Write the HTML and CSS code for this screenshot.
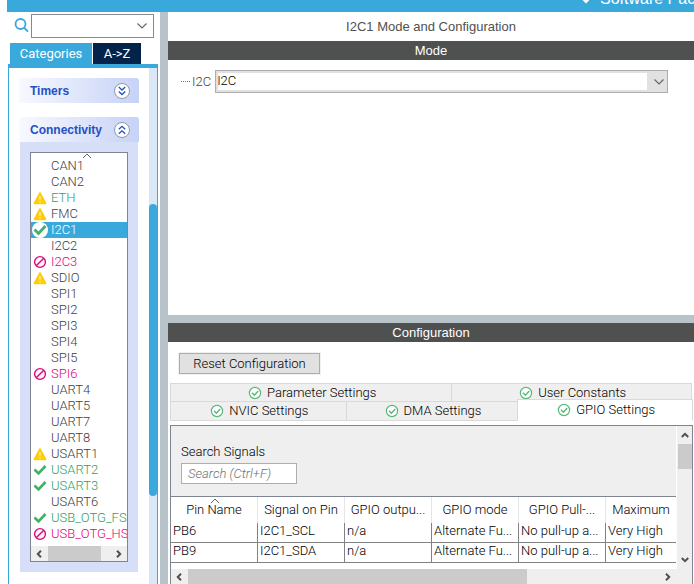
FILE: index.html
```html
<!DOCTYPE html>
<html lang="en">
<head>
<meta charset="utf-8">
<title>I2C1 Mode and Configuration</title>
<link rel="stylesheet" href="styles.css">
</head>
<body>
<svg class="defs" aria-hidden="true">
  <symbol id="warn" viewBox="0 0 14 14"><path d="M7 2 L12.6 12.4 H1.4 Z" fill="#ffcc0a" stroke="#ffcc0a" stroke-width="1.6" stroke-linejoin="round"/><path d="M7 5v4.2M7 10.3v1.5" stroke="#fff3c0" stroke-width="1.2"/></symbol>
  <symbol id="check" viewBox="0 0 14 14"><path d="M1.5 6.5 L5.5 10.5 L12.5 3" fill="none" stroke="#46ad6c" stroke-width="2.6"/></symbol>
  <symbol id="checked" viewBox="0 0 16 16"><circle cx="8" cy="8" r="8" fill="#fff"/><path d="M2.5 7.5 L6.5 11.5 L13.5 4" fill="none" stroke="#46ad6c" stroke-width="2.8"/></symbol>
  <symbol id="ban" viewBox="0 0 14 14"><circle cx="7" cy="7" r="5.4" fill="none" stroke="#e6007e" stroke-width="1.4"/><path d="M3.4 10.6 L10.6 3.4" stroke="#e6007e" stroke-width="1.4"/></symbol>
  <symbol id="ok" viewBox="0 0 14 14"><circle cx="7" cy="7" r="5.6" fill="#fff" stroke="#58b97b" stroke-width="1.2"/><path d="M4 6.7 L6.4 9.2 L10.2 5" fill="none" stroke="#58b97b" stroke-width="1.4"/></symbol>
  <symbol id="down" viewBox="0 0 12 8"><path d="M1.5 1.5 L6 6 L10.5 1.5" fill="none" stroke="currentColor" stroke-width="1.2"/></symbol>
  <symbol id="arrow" viewBox="0 0 10 10"><path d="M1.8 7 L5 3.8 L8.2 7" fill="none" stroke="#505050" stroke-width="2"/></symbol>
  <symbol id="sort" viewBox="0 0 10 6"><path d="M1 5 L5 1 L9 5" fill="none" stroke="#666" stroke-width="1"/></symbol>
</svg>
<div class="app">
  <header class="topbar"><svg class="packs-icon" viewBox="0 0 12 8" aria-hidden="true"><path d="M1.5 1.5 L6 6 L10.5 1.5" fill="none" stroke="#fff" stroke-width="2"/></svg><a href="#packs">Software Packs</a></header>
  <div class="main">
    <aside class="sidebar">
      <div class="search">
        <svg class="search-icon" viewBox="0 0 16 16" aria-hidden="true"><circle cx="6.5" cy="6" r="5" fill="none" stroke="#39a9dc" stroke-width="1.8"/><path d="M10 9.6 L14 13.6" stroke="#39a9dc" stroke-width="2"/></svg>
        <div class="combo finder"><select aria-label="Search peripherals"><option></option></select><svg aria-hidden="true"><use href="#down"/></svg></div>
      </div>
      <div class="side-tabs"><button class="active">Categories</button><button>A-&gt;Z</button></div>
      <div class="side-body">
        <div class="groups">
          <button class="group">Timers<svg viewBox="0 0 18 18" aria-hidden="true"><circle cx="9" cy="9" r="7.5" fill="#fff" stroke="#8d98ad"/><path d="M5.8 5 L9 8 L12.2 5 M5.8 9.5 L9 12.5 L12.2 9.5" fill="none" stroke="#2450c4" stroke-width="1.3"/></svg></button>
          <div class="open-group">
            <button class="group">Connectivity<svg viewBox="0 0 18 18" aria-hidden="true"><circle cx="9" cy="9" r="7.5" fill="#fff" stroke="#8d98ad"/><path d="M5.8 8.3 L9 5.3 L12.2 8.3 M5.8 12.8 L9 9.8 L12.2 12.8" fill="none" stroke="#2450c4" stroke-width="1.3"/></svg></button>
            <div class="group-body">
              <div class="listbox">
                <svg class="list-sort" aria-hidden="true"><use href="#sort"/></svg>
                <ul>
                  <li>CAN1</li>
                  <li>CAN2</li>
                  <li class="on"><svg><use href="#warn"/></svg>ETH</li>
                  <li><svg><use href="#warn"/></svg>FMC</li>
                  <li class="selected"><svg><use href="#checked"/></svg>I2C1</li>
                  <li>I2C2</li>
                  <li class="off"><svg><use href="#ban"/></svg>I2C3</li>
                  <li><svg><use href="#warn"/></svg>SDIO</li>
                  <li>SPI1</li>
                  <li>SPI2</li>
                  <li>SPI3</li>
                  <li>SPI4</li>
                  <li>SPI5</li>
                  <li class="off"><svg><use href="#ban"/></svg>SPI6</li>
                  <li>UART4</li>
                  <li>UART5</li>
                  <li>UART7</li>
                  <li>UART8</li>
                  <li><svg><use href="#warn"/></svg>USART1</li>
                  <li class="on"><svg><use href="#check"/></svg>USART2</li>
                  <li class="on"><svg><use href="#check"/></svg>USART3</li>
                  <li>USART6</li>
                  <li class="on"><svg><use href="#check"/></svg>USB_OTG_FS</li>
                  <li class="off"><svg><use href="#ban"/></svg>USB_OTG_HS</li>
                </ul>
                <div class="hbar"><svg class="left"><use href="#arrow"/></svg><div class="track"><div class="thumb list-thumb"></div></div><svg class="right"><use href="#arrow"/></svg></div>
              </div>
            </div>
          </div>
        </div>
        <div class="side-scroll"><div></div></div>
      </div>
    </aside>
    <main class="content">
      <section class="mode">
        <h1>I2C1 Mode and Configuration</h1>
        <h2>Mode</h2>
        <div class="mode-row">
          <span class="branch"></span><label for="i2c">I2C</label>
          <div class="combo protocol"><select id="i2c"><option>I2C</option></select><svg aria-hidden="true"><use href="#down"/></svg></div>
        </div>
      </section>
      <section class="config">
        <h2>Configuration</h2>
        <button class="reset">Reset Configuration</button>
        <div class="tabs">
          <div class="tab-row first"><button><svg><use href="#ok"/></svg>Parameter Settings</button><button><svg><use href="#ok"/></svg>User Constants</button></div>
          <div class="tab-row second"><button><svg><use href="#ok"/></svg>NVIC Settings</button><button><svg><use href="#ok"/></svg>DMA Settings</button><button class="current"><svg><use href="#ok"/></svg>GPIO Settings</button></div>
        </div>
        <div class="panel">
          <div class="panel-top">
            <div class="panel-main">
              <div class="signals"><label for="signals">Search Signals</label><input id="signals" type="text" placeholder="Search (Ctrl+F)"></div>
              <table>
                <thead><tr><th>Pin Name<svg class="col-sort" aria-hidden="true"><use href="#sort"/></svg></th><th>Signal on Pin</th><th>GPIO outpu...</th><th>GPIO mode</th><th>GPIO Pull-...</th><th>Maximum</th></tr></thead>
                <tbody>
                  <tr><td>PB6</td><td>I2C1_SCL</td><td>n/a</td><td>Alternate Fu...</td><td>No pull-up a...</td><td>Very High</td></tr>
                  <tr><td>PB9</td><td>I2C1_SDA</td><td>n/a</td><td>Alternate Fu...</td><td>No pull-up a...</td><td>Very High</td></tr>
                </tbody>
              </table>
            </div>
            <div class="vbar"><svg><use href="#arrow"/></svg><div class="track"><div class="thumb"></div></div><svg class="down"><use href="#arrow"/></svg></div>
          </div>
          <div class="hbar panel-hbar"><svg class="left"><use href="#arrow"/></svg><div class="track"><div class="thumb panel-thumb"></div></div><svg class="right"><use href="#arrow"/></svg></div>
        </div>
      </section>
    </main>
  </div>
</div>
</body>
</html>
```
FILE: styles.css
```css
* { box-sizing: border-box; }
body { margin: 0; background: #fff; color: #000; font: 300 13px/16px Roboto, "Liberation Sans", sans-serif; }
button, input, select { font: inherit; color: inherit; margin: 0; padding: 0; border: 0; border-radius: 0; }
h1, h2, ul { margin: 0; padding: 0; }
svg { display: block; flex: none; }
.defs { position: absolute; width: 0; height: 0; }

.app { height: 100vh; display: flex; flex-direction: column; overflow: hidden; }
.topbar { flex: none; height: 12px; margin-left: 7px; padding: 0 0 4px; background: #39a9dc; overflow: hidden; display: flex; justify-content: flex-end; align-items: flex-end; gap: 8px; }
.topbar a { width: 94px; color: #fff; text-decoration: none; white-space: nowrap; font: 16px/18px "Liberation Sans", sans-serif; }
.packs-icon { width: 12px; height: 8px; margin-bottom: 4px; }
.main { flex: 1; min-height: 0; display: flex; }

.sidebar { width: 160px; flex: none; padding: 2px 2px 0 8px; display: flex; flex-direction: column; }
.search { display: flex; padding: 0 4px 0 6px; gap: 1px; }
.search-icon { width: 16px; height: 16px; margin-top: 4px; }
.combo { position: relative; flex: 1; display: flex; }
.combo select { width: 100%; appearance: none; background: #fff; }
.combo svg { position: absolute; right: 5px; top: 8px; width: 12px; height: 8px; color: #666; pointer-events: none; }
.finder svg { right: 6px; }
.finder select { height: 24px; border: 1px solid #858a90; }

.side-tabs { display: flex; gap: 1px; margin-top: 5px; padding-left: 2px; }
.side-tabs button { height: 21px; width: 48px; background: #03234b; color: #fff; font-weight: 400; }
.side-tabs .active { width: 82px; background: #39a9dc; }
.side-body { flex: 1; min-height: 0; display: flex; border: 1px solid #39a9dc; border-width: 4px 1px 0; }
.groups { flex: 1; min-width: 0; padding: 10px 10px 0; }
.group { width: 100%; height: 25px; padding: 0 8px 0 11px; display: flex; align-items: center; justify-content: space-between; background: linear-gradient(90deg, #f8f9ff, #c6d2f7); color: #2450c4; font: bold 12px/16px "Liberation Sans", sans-serif; border-radius: 3px 3px 0 0; }
.group svg { width: 18px; height: 18px; }
.open-group { margin-top: 14px; }
.group-body { margin: 0 1px; padding: 10px; background: #d6dff7; }
.listbox { position: relative; border: 1px solid #7f8493; background: #fff; padding-top: 5px; overflow: hidden; color: #404040; }
.list-sort { position: absolute; left: 51px; top: 0; width: 10px; height: 6px; }
.listbox ul { list-style: none; }
.listbox li { position: relative; height: 16px; padding-left: 20px; white-space: nowrap; }
.listbox li svg { position: absolute; left: 2px; top: 1px; width: 14px; height: 14px; }
.listbox .on { color: #2f9f58; }
.listbox .off { color: #e6007e; }
.listbox .selected { background: #39a9dc; color: #fff; }
.listbox .selected svg { left: 1px; top: 0; width: 16px; height: 16px; }
.listbox .hbar { margin-top: 4px; }
.side-scroll { width: 8px; background: #d9e8f4; padding-top: 136px; }
.side-scroll div { height: 292px; border-radius: 4px; background: #39a9dc; }

.hbar { display: flex; align-items: center; height: 15px; padding: 0 3px; gap: 4px; background: #efefef; }
.hbar svg, .vbar svg { width: 10px; height: 10px; }
.left { transform: rotate(-90deg); }
.right { transform: rotate(90deg); }
.down { transform: rotate(180deg); }
.track { flex: 1; align-self: stretch; }
.thumb { background: #cbcbcb; height: 100%; }
.list-thumb { width: 86%; }

.content { flex: 1; min-width: 0; display: flex; flex-direction: column; border-left: 8px solid #b8c3c9; }
.mode { flex: 1; }
h1, h2 { text-align: center; font: 13px/16px "Liberation Sans", sans-serif; }
h1 { line-height: 29px; color: #505050; }
h2 { line-height: 19px; color: #fff; background: #4f5150; }
.mode-row { display: flex; align-items: center; padding: 10px 26px 0 13px; color: #404040; }
.branch { width: 9px; margin-right: 2px; border-top: 1px dotted #777; }
.protocol { margin-left: 4px; color: #000; }
.protocol select { height: 23px; padding: 0 0 2px 1px; border: 1px solid #adadad; box-shadow: inset 0 0 0 2px #e1e1e1; background: linear-gradient(#e1e1e1, #e1e1e1) right / 20px 100% no-repeat #fff; }
.protocol svg { right: 3px; }

.config { flex: none; border-top: 8px solid #b8c3c9; }
.reset { display: block; margin: 11px 0 9px 11px; width: 141px; height: 21px; border: 1px solid #adadad; background: #e1e1e1; outline: 1px solid #f0f0f0; }
.tabs { margin: 0 1px 0 2px; }
.tab-row { display: grid; }
.first { grid-template-columns: 282fr 241fr; padding-right: 1px; }
.second { grid-template-columns: 176fr 172fr 176fr; }
.tab-row button { display: flex; align-items: center; justify-content: center; gap: 5px; height: 18px; padding-left: 2px; border: 1px solid #d9d9d9; border-width: 1px 0 0 1px; background: #efefef; }
.second button { height: 20px; border-bottom-width: 1px; }
.tab-row button:last-child { border-right-width: 1px; }
.second .current { height: 22px; margin-top: -2px; background: #fff; border-bottom-color: #fff; }
.tab-row svg { width: 14px; height: 14px; }

.panel { margin: 4px 1px 0 2px; border: 1px solid #7f8493; border-bottom: 0; background: #efefef; }
.panel-top { display: flex; }
.panel-main { flex: 1; min-width: 0; background: #fff; }
.signals { height: 70px; padding: 18px 10px 0; background: #efefef; }
.signals label { display: block; }
.signals input { display: block; width: 116px; height: 21px; margin-top: 3px; padding: 0 6px; border: 1px solid #adadad; background: #fff; font-style: italic; }
.signals input::placeholder { color: #707070; }
table { width: 100%; table-layout: fixed; border-collapse: separate; border-spacing: 0; border-top: 1px solid #7f8493; margin-bottom: 6px; }
th:not(:last-child) { width: 87px; }
th, td { padding: 0; white-space: nowrap; overflow: hidden; font-weight: 300; }
th { position: relative; height: 26px; border-right: 1px solid #e5e5e5; }
td { height: 20px; padding-left: 2px; border: 1px solid #828282; border-width: 0 1px 1px 0; vertical-align: top; }
th:last-child, td:last-child { border-right: 0; }
.col-sort { position: absolute; left: 39px; top: 1px; width: 10px; height: 6px; }
.vbar { width: 16px; padding: 4px 0 4px 1px; display: flex; flex-direction: column; align-items: center; gap: 4px; background: #efefef; border-left: 1px solid #fff; }
.vbar .thumb { height: 25px; }
.panel-hbar { padding-right: 19px; }
.panel-thumb { width: 72%; }
```
